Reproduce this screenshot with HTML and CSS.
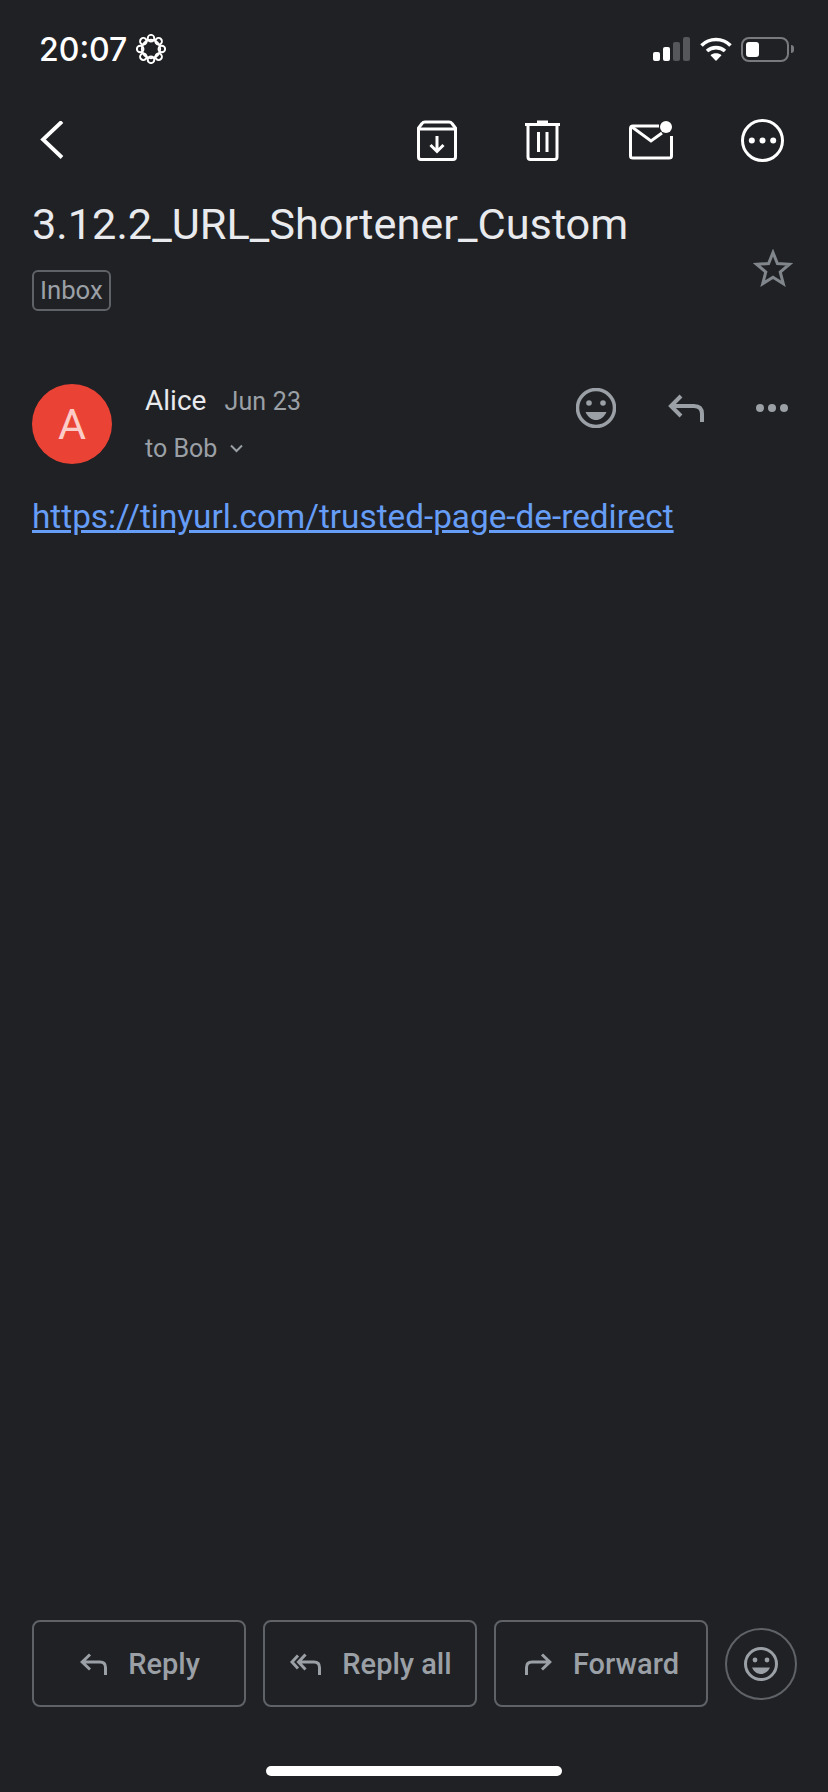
FILE: index.html
```html
<!DOCTYPE html>
<html lang="en">

<head>
    <meta charset="UTF-8">
    <meta name="viewport" content="width=device-width, initial-scale=1.0">
    <title>3.12.2_URL_Shortener_Custom</title>
    <link rel="stylesheet" href="styles.css">
</head>

<body>
    <section class="page">
        <div class="statusBar">
            <div class="statusLeft">
                <span class="time">20:07</span>
                <svg class="focusIcon" width="30" height="30" viewBox="0 0 30 30" fill="none" stroke="#fff" stroke-width="1.9">
                    <circle cx="15" cy="15" r="9.200" />
                    <circle cx="15" cy="4.200" r="3.300" />
                    <circle cx="15" cy="4.200" r="3.300" transform="rotate(45 15 15)" />
                    <circle cx="15" cy="4.200" r="3.300" transform="rotate(90 15 15)" />
                    <circle cx="15" cy="4.200" r="3.300" transform="rotate(135 15 15)" />
                    <circle cx="15" cy="4.200" r="3.300" transform="rotate(180 15 15)" />
                    <circle cx="15" cy="4.200" r="3.300" transform="rotate(225 15 15)" />
                    <circle cx="15" cy="4.200" r="3.300" transform="rotate(270 15 15)" />
                    <circle cx="15" cy="4.200" r="3.300" transform="rotate(315 15 15)" />
                </svg>
            </div>
            <div class="statusRight">
                <svg width="37" height="24" viewBox="0 0 37 24">
                    <rect x="0" y="15" width="7" height="9" rx="2" fill="#fff" />
                    <rect x="10" y="10" width="7" height="14" rx="2" fill="#fff" />
                    <rect x="20" y="5" width="7" height="19" rx="2" fill="#55575b" />
                    <rect x="30" y="0" width="7" height="24" rx="2" fill="#55575b" />
                </svg>
                <svg width="32" height="24" viewBox="0 0 32 24" fill="none" stroke="#fff" stroke-width="3.6">
                    <path d="M1.500 8.500 C9.500 0.500 22.500 0.500 30.500 8.500" />
                    <path d="M7 14 C12 9.500 20 9.500 25 14" />
                    <path d="M16 24 L10.500 18.200 C13.500 15.600 18.500 15.600 21.500 18.200 Z" fill="#fff" stroke="none" />
                </svg>
                <div class="battery">
                    <div class="batteryFill"></div>
                </div>
                <div class="batteryNub"></div>
            </div>
        </div>

        <div class="toolbar">
            <svg class="backIcon" width="24" height="40" viewBox="0 0 24 40" fill="none" stroke="#fff" stroke-width="3.800">
                <path d="M22 0.500 L3 18.500 L22 36.500" />
            </svg>
            <div class="toolIcons">
                <svg width="40" height="41" viewBox="0 0 40 41" fill="none" stroke="#fff" stroke-width="3">
                    <path d="M8 2 H32 Q34 2 35 3.500 L38.500 8 V37 Q38.500 39.500 36 39.500 H4 Q1.500 39.500 1.500 37 V8 L5 3.500 Q6 2 8 2 Z" />
                    <path d="M1.500 9 H38.500" />
                    <path d="M20 16 V31 M13.500 25 L20 31.500 L26.500 25" />
                </svg>
                <svg width="35" height="41" viewBox="0 0 35 41" fill="none" stroke="#fff" stroke-width="3">
                    <path d="M0 4.500 H35" />
                    <path d="M12 2 H23" />
                    <path d="M3 5 V37 Q3 39.500 5.500 39.500 H29.500 Q32 39.500 32 37 V5" />
                    <path d="M13.500 12 V32 M22 12 V32" />
                </svg>
                <svg width="44" height="39" viewBox="0 0 44 39" fill="none" stroke="#fff" stroke-width="3">
                    <path d="M30 5 H4 Q1.500 5 1.500 7.500 V35 Q1.500 37 4 37 H40 Q42.500 37 42.500 35 V15" />
                    <path d="M3 6 L22 20 L33 12" />
                    <circle cx="37" cy="6" r="6" fill="#fff" stroke="none" />
                </svg>
                <svg width="43" height="43" viewBox="0 0 43 43" fill="none" stroke="#fff" stroke-width="3">
                    <circle cx="21.500" cy="21.500" r="20" />
                    <circle cx="10.800" cy="21.500" r="3" fill="#fff" stroke="none" />
                    <circle cx="21.500" cy="21.500" r="3" fill="#fff" stroke="none" />
                    <circle cx="32.200" cy="21.500" r="3" fill="#fff" stroke="none" />
                </svg>
            </div>
        </div>

        <div class="subject">
            <div>
                <h1 class="subjectTitle">3.12.2_URL_Shortener_Custom</h1>
                <span class="label">Inbox</span>
            </div>
            <svg class="starIcon" width="40" height="38" viewBox="0 0 40 38" fill="none" stroke="#80868b" stroke-width="3">
                <path d="M20 3.500 L24.400 14.500 L36.500 15.200 L27.200 23 L30.300 34.700 L20 28.300 L9.700 34.700 L12.800 23 L3.500 15.200 L15.600 14.500 Z" />
            </svg>
        </div>

        <div class="message">
            <div class="avatar">A</div>
            <div class="sender">
                <div class="senderTop">
                    <span class="senderName">Alice</span>
                    <span class="senderDate">Jun 23</span>
                </div>
                <div class="senderTo">
                    <span>to Bob</span>
                    <svg width="13" height="9" viewBox="0 0 13 9" fill="none" stroke="#9aa0a6" stroke-width="2">
                        <path d="M1 1.500 L6.500 7 L12 1.500" />
                    </svg>
                </div>
            </div>
            <div class="messageIcons">
                <svg width="40" height="40" viewBox="0 0 40 40">
                    <circle cx="20" cy="20" r="18.500" fill="none" stroke="#9aa0a6" stroke-width="3.500" />
                    <circle cx="13" cy="15" r="2.800" fill="#9aa0a6" />
                    <circle cx="27" cy="15" r="2.800" fill="#9aa0a6" />
                    <path d="M9.500 24 H30.500 C28 29.500 24 32 20 32 C16 32 12 29.500 9.500 24 Z" fill="#9aa0a6" />
                </svg>
                <svg width="36" height="28" viewBox="0 0 36 28" fill="none" stroke="#9aa0a6" stroke-width="4">
                    <path d="M13 2 L3 12 L13 22 M3 12 H26 Q34 12 34 20 V28" />
                </svg>
                <svg width="32" height="8" viewBox="0 0 32 8" fill="#9aa0a6">
                    <circle cx="4" cy="4" r="4" />
                    <circle cx="16" cy="4" r="4" />
                    <circle cx="28" cy="4" r="4" />
                </svg>
            </div>
        </div>

        <a class="messageLink" href="#">https://tinyurl.com/trusted-page-de-redirect</a>

        <div class="actions">
            <button class="actionBtn">
                <svg width="27" height="22" viewBox="0 0 27 22" fill="none" stroke="#9aa0a6" stroke-width="3">
                    <path d="M10 1.500 L2.200 9 L10 16.500 M2.200 9 H20 Q25.500 9 25.500 14.500 V22" />
                </svg>
                Reply
            </button>
            <button class="actionBtn">
                <svg width="31" height="22" viewBox="0 0 31 22" fill="none" stroke="#9aa0a6" stroke-width="3">
                    <path d="M8 2.500 L2 9 L8 15.500 M15.500 1.500 L8.500 9 L15.500 16.500 M8.500 9 H24 Q29.500 9 29.500 14.500 V22" />
                </svg>
                Reply all
            </button>
            <button class="actionBtn">
                <svg width="27" height="22" viewBox="0 0 27 22" fill="none" stroke="#9aa0a6" stroke-width="3">
                    <path d="M17 1.500 L24.800 9 L17 16.500 M24.800 9 H7 Q1.500 9 1.500 14.500 V22" />
                </svg>
                Forward
            </button>
            <div class="emojiBtn">
                <svg width="34" height="34" viewBox="0 0 34 34">
                    <circle cx="17" cy="17" r="15.500" fill="none" stroke="#9aa0a6" stroke-width="3" />
                    <circle cx="11" cy="13" r="2.400" fill="#9aa0a6" />
                    <circle cx="23" cy="13" r="2.400" fill="#9aa0a6" />
                    <path d="M8 20.500 H26 C24 25 20.500 27 17 27 C13.500 27 10 25 8 20.500 Z" fill="#9aa0a6" />
                </svg>
            </div>
        </div>

        <div class="homeBar"></div>
    </section>
</body>

</html>
```

FILE: styles.css
```css
html {
    background-color: rgb(32, 33, 36);
}

body {
    margin: 0;
    font-family: "Roboto", "Liberation Sans", sans-serif;
}

.page {
    display: flex;
    flex-direction: column;
    height: 1792px;
    overflow: hidden;
    box-sizing: border-box;
}

.statusBar {
    display: flex;
    justify-content: space-between;
    align-items: center;
    height: 30px;
    margin-top: 34px;
    padding: 0 34px 0 39px;
}

.statusLeft {
    display: flex;
    align-items: center;
    gap: 9px;
}

.time {
    font-family: "Inter", sans-serif;
    font-size: 32px;
    font-weight: 500;
    color: white;
}

.statusRight {
    display: flex;
    align-items: center;
    gap: 10px;
}

.battery {
    box-sizing: border-box;
    width: 48px;
    height: 25px;
    margin-left: -1px;
    padding: 3px;
    border: 2px solid rgb(120, 122, 126);
    border-radius: 8px;
}

.batteryFill {
    width: 13px;
    height: 100%;
    background-color: white;
    border-radius: 3px;
}

.batteryNub {
    width: 3px;
    height: 8px;
    margin-left: -8px;
    background-color: rgb(120, 122, 126);
    border-radius: 0 3px 3px 0;
}

.toolbar {
    display: flex;
    justify-content: space-between;
    align-items: center;
    height: 43px;
    margin-top: 55px;
    padding: 0 44px 0 40px;
}

.toolIcons {
    display: flex;
    align-items: center;
    gap: 68.500px;
}

.subject {
    display: flex;
    justify-content: space-between;
    align-items: flex-end;
    margin-top: 39px;
    padding: 0 35px 0 32px;
}

.subjectTitle {
    margin: 0;
    font-size: 43.300px;
    font-weight: 400;
    line-height: 48px;
    color: rgb(232, 234, 237);
}

.label {
    display: inline-block;
    box-sizing: border-box;
    height: 41px;
    margin-top: 21px;
    padding: 0 6px;
    border: 2px solid rgb(95, 99, 104);
    border-radius: 6px;
    font-size: 25.700px;
    line-height: 37px;
    color: rgb(154, 160, 166);
}

.starIcon {
    margin-bottom: 24px;
}

.message {
    display: flex;
    align-items: flex-start;
    margin-top: 73px;
    padding: 0 40px 0 32px;
}

.avatar {
    display: flex;
    justify-content: center;
    align-items: center;
    width: 80px;
    height: 80px;
    border-radius: 50%;
    background-color: rgb(234, 67, 53);
    color: rgb(252, 205, 200);
    font-size: 43px;
}

.sender {
    flex: 1;
    margin-left: 33px;
}

.senderTop {
    display: flex;
    align-items: baseline;
    gap: 18px;
    height: 35px;
}

.senderName {
    font-size: 28px;
    color: rgb(232, 234, 237);
}

.senderDate {
    font-size: 25px;
    letter-spacing: 0.2px;
    color: rgb(154, 160, 166);
}

.senderTo {
    display: flex;
    align-items: center;
    gap: 13px;
    margin-top: 15px;
    font-size: 25px;
    color: rgb(154, 160, 166);
}

.messageIcons {
    display: flex;
    align-items: center;
    gap: 52px;
    margin-top: 4px;
}

.messageLink {
    align-self: flex-start;
    margin: 35px 0 0 32px;
    font-size: 33.300px;
    line-height: 36px;
    color: rgb(102, 157, 246);
}

.actions {
    display: flex;
    align-items: center;
    gap: 17px;
    margin-top: auto;
    padding: 0 32px;
}

.actionBtn {
    display: flex;
    justify-content: center;
    align-items: center;
    gap: 21px;
    width: 214px;
    height: 87px;
    padding: 0 0 0 2px;
    background: none;
    border: 2px solid rgb(95, 99, 104);
    border-radius: 8px;
    font-family: "Roboto", sans-serif;
    font-size: 29px;
    font-weight: 500;
    color: rgb(154, 160, 166);
}

.emojiBtn {
    display: flex;
    justify-content: center;
    align-items: center;
    flex: none;
    box-sizing: border-box;
    width: 72px;
    height: 72px;
    margin-right: -12px;
    border: 2px solid rgb(95, 99, 104);
    border-radius: 50%;
}

.homeBar {
    align-self: center;
    width: 296px;
    height: 10px;
    margin: 59px 0 16px;
    border-radius: 5px;
    background-color: white;
}
```
